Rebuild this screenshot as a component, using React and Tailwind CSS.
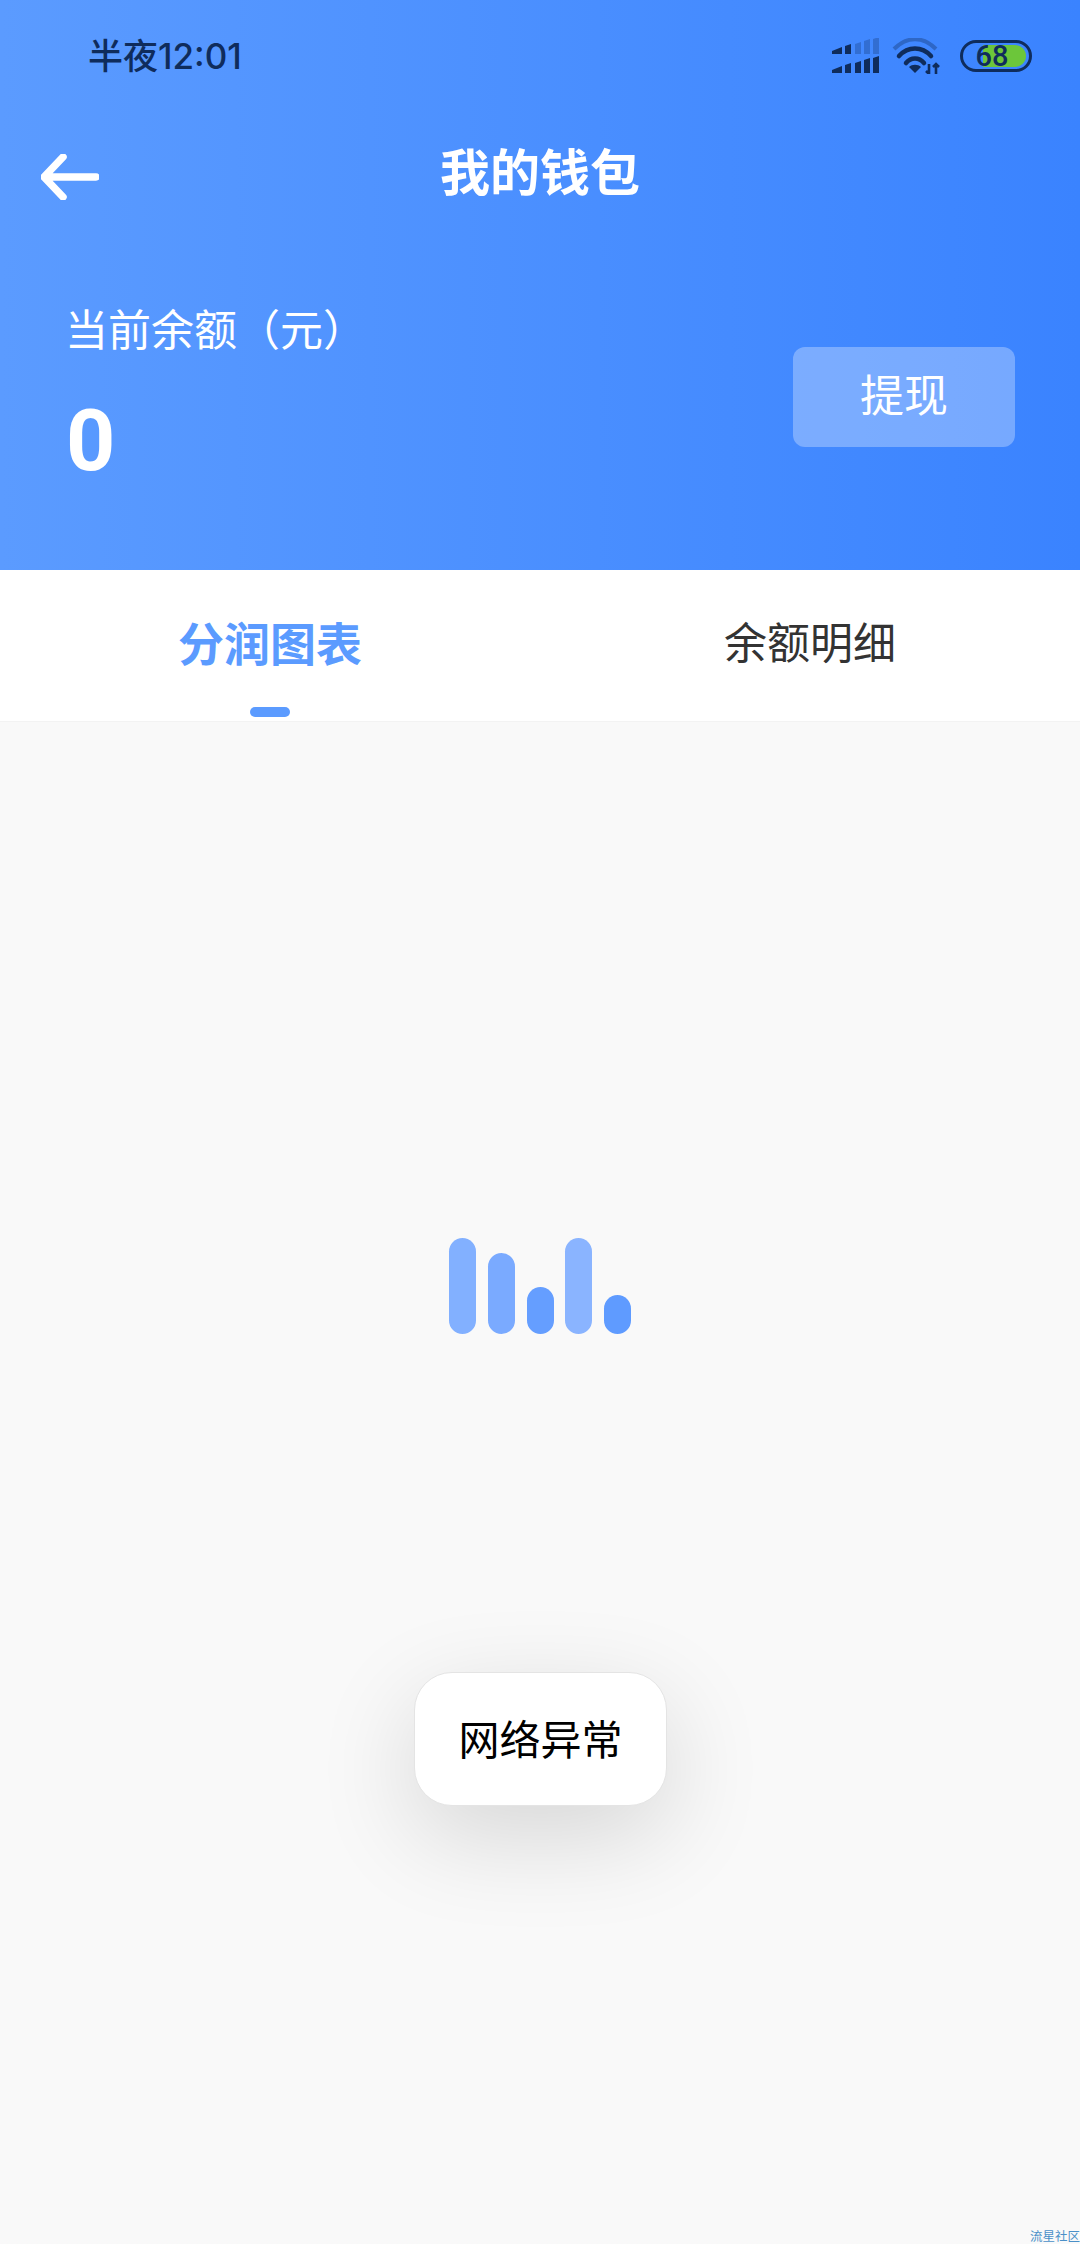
const DARK = "#0f2c5c";

function SignalIcon() {
  const xs = [[1, 10], [14, 6], [24, 6], [33, 6], [42, 6]];
  const row = (base, tops, faintFrom) =>
    xs.map(([x, w], i) => (
      <path
        key={`${base}-${i}`}
        d={i === 0
          ? `M${x} ${base - 3}L${x + w} ${tops[0]}V${base}H${x}Z`
          : `M${x} ${tops[i] + 1}L${x + w} ${tops[i] - 1}V${base}H${x}Z`}
        fill={DARK}
        opacity={i >= faintFrom ? 0.28 : 1}
        strokeLinejoin="round"
      />
    ));
  return (
    <svg width="48" height="36" viewBox="0 0 48 36" className="block">
      {row(16, [9, 7, 5, 2, 0], 2)}
      {row(35, [28, 26, 24, 21, 19], 9)}
    </svg>
  );
}

function WifiIcon() {
  return (
    <svg width="52" height="36" viewBox="0 0 52 36" className="block" fill="none">
      <path d="M2 11C15 -2 31 -2 44 11" stroke={DARK} strokeWidth="4" opacity="0.35" />
      <path d="M7 18C16 8 30 8 39 18" stroke={DARK} strokeWidth="4.5" strokeLinecap="round" />
      <path d="M14 25C19 19 27 19 32 25" stroke={DARK} strokeWidth="4.5" strokeLinecap="round" />
      <path d="M23 35L17 29C20 26 26 26 29 29Z" fill={DARK} />
      <path d="M37 26V36M34 33L37 36M44 36V26M41 29L44 26L47 29" stroke={DARK} strokeWidth="2.6" />
    </svg>
  );
}

function BatteryIcon() {
  return (
    <div className="relative ml-[3px] flex h-[32px] w-[72px] items-center justify-center rounded-[16px] border-[3px] border-[#0f2c5c]">
      <div className="absolute left-[20px] top-[2px] h-[22px] w-[43px] rounded-r-[11px] bg-[#6cc63a]" />
      <span className="relative ml-[-8px] font-['Roboto','Noto_Sans',sans-serif] text-[29px] font-medium leading-none text-[#0f2c5c]">68</span>
    </div>
  );
}

function BackArrow() {
  return (
    <svg width="58" height="46" viewBox="0 0 58 46" fill="none" className="mt-[6px] block">
      <path
        d="M55 23H4M22 3L3 23L22 43"
        stroke="#ffffff"
        strokeWidth="7.5"
        strokeLinecap="round"
        strokeLinejoin="round"
      />
    </svg>
  );
}

const bars = [
  { h: "h-[96px]", c: "bg-[#82b0ff]" },
  { h: "h-[81px]", c: "bg-[#7aaaff]" },
  { h: "h-[47px]", c: "bg-[#659eff]" },
  { h: "h-[96px]", c: "bg-[#8ab4ff]" },
  { h: "h-[39px]", c: "bg-[#5f9bff]" },
];

export default function App() {
  return (
    <div className="relative flex h-[2244px] w-[1080px] flex-col overflow-hidden bg-[#f9f9f9] font-['Roboto','Noto_Sans_CJK_SC',sans-serif]">
      <header className="flex h-[570px] shrink-0 flex-col bg-gradient-to-r from-[#5b9bff] to-[#3a83ff]">
        <div className="flex h-[112px] items-center justify-between pl-[88px] pr-[48px]">
          <span className="font-['Inter','Noto_Sans_CJK_SC',sans-serif] text-[35px] font-medium leading-none text-[#0f2c5c]">半夜12:01</span>
          <div className="flex items-center gap-[13px]">
            <SignalIcon />
            <WifiIcon />
            <BatteryIcon />
          </div>
        </div>
        <div className="mt-[31px] flex h-[62px] items-center justify-between px-[41px]">
          <BackArrow />
          <h1 className="text-[50px] font-bold leading-none text-white">我的钱包</h1>
          <div className="w-[58px]" />
        </div>
        <div className="mt-[105px] flex items-start justify-between pl-[65px] pr-[65px]">
          <div className="flex flex-col">
            <span className="text-[43px] leading-none text-white">当前余额（元）</span>
            <span className="ml-[1px] mt-[45px] text-[86px] font-bold leading-none text-white">0</span>
          </div>
          <button className="mt-[37px] flex h-[100px] w-[222px] items-center justify-center rounded-[12px] bg-white/30 text-[44px] leading-none text-white">
            提现
          </button>
        </div>
      </header>

      <nav className="flex h-[152px] shrink-0 border-b border-[#f3f3f3] bg-white">
        <div className="relative flex flex-1 items-start justify-center pt-[52px]">
          <span className="text-[46px] font-bold leading-none text-[#5b9bff]">分润图表</span>
          <div className="absolute bottom-[4px] h-[10px] w-[40px] rounded-[5px] bg-[#5b9bff]" />
        </div>
        <div className="flex flex-1 items-start justify-center pt-[53px]">
          <span className="text-[43px] leading-none text-[#333333]">余额明细</span>
        </div>
      </nav>

      <main className="flex flex-1 justify-center pt-[516px]">
        <div className="flex h-[96px] items-end gap-[11.75px]">
          {bars.map((b, i) => (
            <div key={i} className={`w-[27px] rounded-full ${b.h} ${b.c}`} />
          ))}
        </div>
      </main>

      <div className="absolute left-[414px] top-[1672px] flex h-[134px] w-[253px] items-center justify-center rounded-[38px] border border-[#e4e4e4] bg-white pt-[4px] text-[41px] leading-none text-black shadow-[0_30px_100px_rgba(0,0,0,0.14)]">
        网络异常
      </div>

      <span className="absolute right-0 top-[2231px] text-[12.5px] leading-none text-[#4a90c8]">流星社区</span>
    </div>
  );
}
